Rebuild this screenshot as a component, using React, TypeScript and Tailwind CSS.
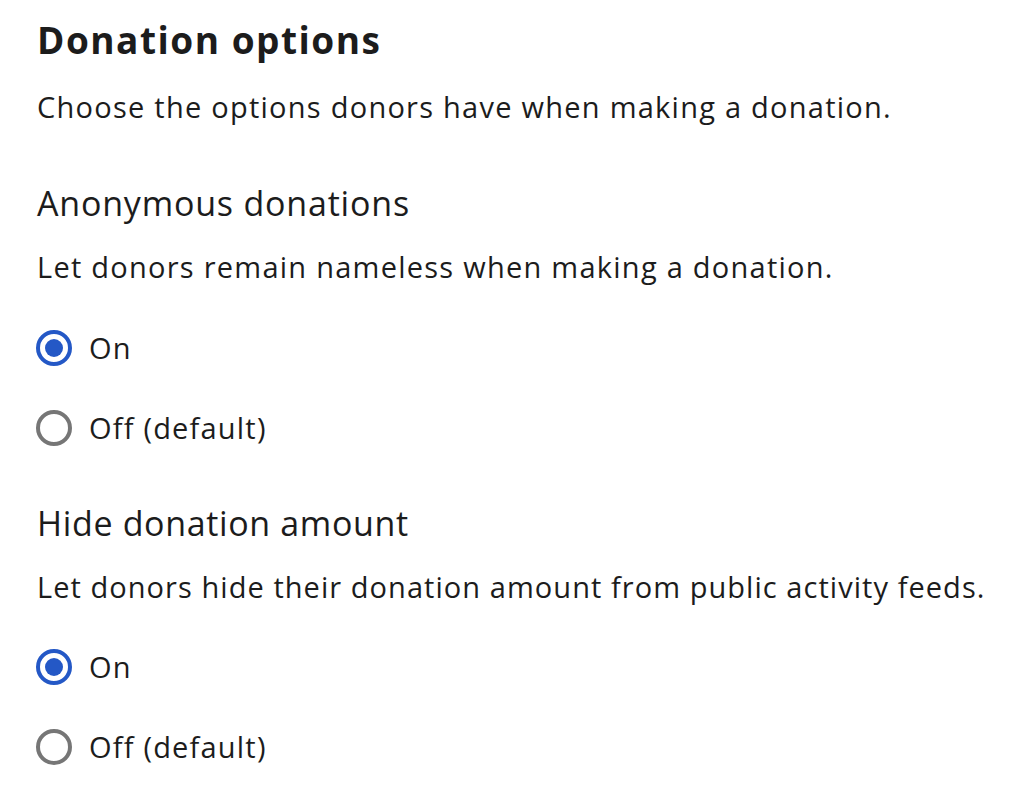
import React from "react";

function Radio({ checked, label }: { checked: boolean; label: string }) {
  return (
    <div className="flex items-center h-[40px] gap-[17px]">
      {checked ? (
        <span className="ml-[-1px] w-[36px] h-[36px] rounded-full border-[4px] border-[#2458c6] flex items-center justify-center">
          <span className="w-[18px] h-[18px] rounded-full bg-[#2458c6]" />
        </span>
      ) : (
        <span className="ml-[-1px] w-[36px] h-[36px] rounded-full border-[4px] border-[#767676]" />
      )}
      <span className="text-[29px] leading-[40px] tracking-[1.2px]">{label}</span>
    </div>
  );
}

export default function App() {
  return (
    <div
      className="w-[1032px] h-[804px] bg-white text-[#1c1c1c] pl-[37px] pt-[16px] overflow-hidden"
      style={{ fontFamily: "'Open Sans', 'Noto Sans', sans-serif" }}
    >
      <h1 className="text-[37px] leading-[48px] font-bold tracking-[1.5px]">Donation options</h1>
      <p className="mt-[23px] text-[29px] leading-[40px] tracking-[1.25px]">
        Choose the options donors have when making a donation.
      </p>

      <h2 className="mt-[56px] text-[34px] leading-[40px] tracking-[0.8px]">Anonymous donations</h2>
      <p className="mt-[24px] text-[29px] leading-[40px] tracking-[1.25px]">
        Let donors remain nameless when making a donation.
      </p>
      <div className="mt-[41px] flex flex-col gap-[40px]">
        <Radio checked label="On" />
        <Radio checked={false} label="Off (default)" />
      </div>

      <h2 className="mt-[55px] text-[34px] leading-[40px] tracking-[0.65px]">Hide donation amount</h2>
      <p className="mt-[24px] text-[29px] leading-[40px] tracking-[1.05px]">
        Let donors hide their donation amount from public activity feeds.
      </p>
      <div className="mt-[40px] flex flex-col gap-[40px]">
        <Radio checked label="On" />
        <Radio checked={false} label="Off (default)" />
      </div>
    </div>
  );
}
